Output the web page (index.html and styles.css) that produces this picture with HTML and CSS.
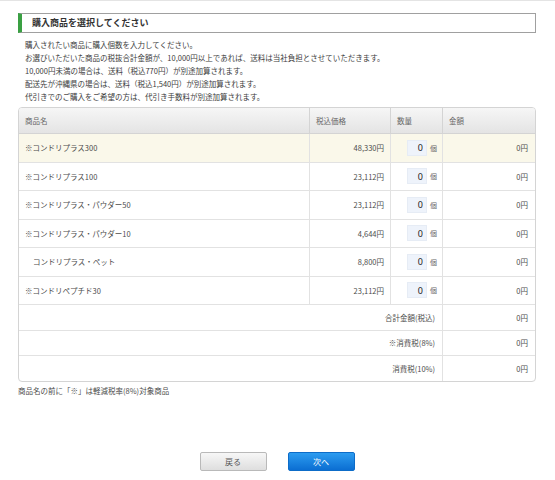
FILE: index.html
```html
<!DOCTYPE html>
<html lang="ja">
<head>
<meta charset="utf-8">
<title>購入商品を選択してください</title>
<link rel="stylesheet" href="styles.css">
</head>
<body>
<div class="page">
  <h2 class="title">購入商品を選択してください</h2>
  <div class="intro">
    <p>購入されたい商品に購入個数を入力してください。</p>
    <p>お選びいただいた商品の税抜合計金額が、10,000円以上であれば、送料は当社負担とさせていただきます。</p>
    <p>10,000円未満の場合は、送料（税込770円）が別途加算されます。</p>
    <p>配送先が沖縄県の場合は、送料（税込1,540円）が別途加算されます。</p>
    <p>代引きでのご購入をご希望の方は、代引き手数料が別途加算されます。</p>
  </div>
  <table class="items">
    <colgroup>
      <col class="c-name"><col class="c-price"><col class="c-qty"><col class="c-amount">
    </colgroup>
    <thead>
      <tr><th>商品名</th><th>税込価格</th><th>数量</th><th class="last">金額</th></tr>
    </thead>
    <tbody>
      <tr class="row hl"><td class="name">※コンドリプラス300</td><td class="price">48,330円</td><td class="qty"><input class="num" type="text" value="0"><span class="unit">個</span></td><td class="amount last">0円</td></tr>
      <tr class="row"><td class="name">※コンドリプラス100</td><td class="price">23,112円</td><td class="qty"><input class="num" type="text" value="0"><span class="unit">個</span></td><td class="amount last">0円</td></tr>
      <tr class="row"><td class="name">※コンドリプラス・パウダー50</td><td class="price">23,112円</td><td class="qty"><input class="num" type="text" value="0"><span class="unit">個</span></td><td class="amount last">0円</td></tr>
      <tr class="row"><td class="name">※コンドリプラス・パウダー10</td><td class="price">4,644円</td><td class="qty"><input class="num" type="text" value="0"><span class="unit">個</span></td><td class="amount last">0円</td></tr>
      <tr class="row"><td class="name indent">コンドリプラス・ペット</td><td class="price">8,800円</td><td class="qty"><input class="num" type="text" value="0"><span class="unit">個</span></td><td class="amount last">0円</td></tr>
      <tr class="row"><td class="name">※コンドリペプチド30</td><td class="price">23,112円</td><td class="qty"><input class="num" type="text" value="0"><span class="unit">個</span></td><td class="amount last">0円</td></tr>
      <tr class="sum"><td class="label" colspan="3">合計金額(税込)</td><td class="amount last">0円</td></tr>
      <tr class="sum"><td class="label" colspan="3">※消費税(8%)</td><td class="amount last">0円</td></tr>
      <tr class="sum end"><td class="label" colspan="3">消費税(10%)</td><td class="amount last">0円</td></tr>
    </tbody>
  </table>
  <p class="note">商品名の前に「※」は軽減税率(8%)対象商品</p>
  <div class="actions">
    <button class="btn back" type="button">戻る</button>
    <button class="btn next" type="button">次へ</button>
  </div>
</div>
</body>
</html>
```

FILE: styles.css
```css
html, body {
  margin: 0;
  padding: 0;
  background: #fff;
}
body {
  font-family: "Noto Sans CJK JP", "Noto Sans", sans-serif;
  color: #3c3c3c;
  border-top: 1px solid #e4e4e4;
}
.page {
  padding: 12px 19px 0 18px;
}
.title {
  margin: 0;
  height: 18px;
  line-height: 18px;
  border: 1px solid #a0a0a0;
  border-left: 4px solid #3aa043;
  padding-left: 10px;
  font-size: 9px;
  font-weight: bold;
  color: #333;
}
.intro {
  margin-top: 5px;
  padding-left: 7px;
  font-size: 7.5px;
  line-height: 13px;
  color: #3c3c3c;
}
.intro p {
  margin: 0;
}
.items {
  margin-top: 4px;
  width: 518px;
  table-layout: fixed;
  border-collapse: separate;
  border-spacing: 0;
  border: 1px solid #d4d4d4;
  border-radius: 4px;
  overflow: hidden;
  font-size: 7.5px;
  color: #4c4c4c;
}
.c-name { width: 291px; }
.c-price { width: 81px; }
.c-qty { width: 52px; }
.c-amount { width: 92px; }
.items th {
  height: 25px;
  padding: 0 0 0 6px;
  text-align: left;
  font-weight: normal;
  color: #666;
  background: linear-gradient(#f6f6f6, #e4e4e4);
  border-bottom: 1px solid #d4d4d4;
  border-right: 1px solid #d4d4d4;
}
.items td {
  padding: 0;
  border-bottom: 1px solid #e2e2e2;
  border-right: 1px solid #e2e2e2;
}
.items .last {
  border-right: none;
}
.row td {
  height: 27.5px;
}
.row.hl td {
  background: #faf8ea;
}
.name {
  padding-left: 6px !important;
}
.name.indent {
  padding-left: 14px !important;
}
.price {
  text-align: right;
  padding-right: 6px !important;
}
.amount {
  text-align: right;
  padding-right: 7px !important;
}
.qty {
  padding-left: 16px !important;
  white-space: nowrap;
}
.num {
  box-sizing: border-box;
  width: 20px;
  height: 16px;
  margin: 0 3px 0 0;
  padding: 0 3px 0 0;
  border: 1px solid #e6ecf5;
  background: #eef3fb;
  text-align: right;
  font-family: "Noto Sans", sans-serif;
  font-size: 9px;
  color: #222;
  vertical-align: middle;
  outline: none;
}
.unit {
  font-size: 7px;
  color: #666;
  vertical-align: middle;
}
.sum td {
  height: 24.5px;
}
.sum.end td {
  border-bottom: none;
}
.label {
  text-align: right;
  padding-right: 7px !important;
}
.note {
  margin: 3px 0 0 0;
  font-size: 7.5px;
  line-height: 11px;
  color: #4c4c4c;
}
.actions {
  display: flex;
  justify-content: center;
  gap: 21px;
  margin-top: 56px;
}
.btn {
  box-sizing: border-box;
  width: 67px;
  height: 19px;
  padding: 0;
  border-radius: 2px;
  font-family: "Noto Sans CJK JP", sans-serif;
  font-size: 8px;
  cursor: pointer;
}
.btn.back {
  border: 1px solid #b9b9b9;
  background: linear-gradient(#f7f7f7, #dedede);
  color: #555;
}
.btn.next {
  border: 1px solid #0d6cc8;
  background: linear-gradient(#2c9cf0, #0b6ed2);
  color: #fff;
}
```
